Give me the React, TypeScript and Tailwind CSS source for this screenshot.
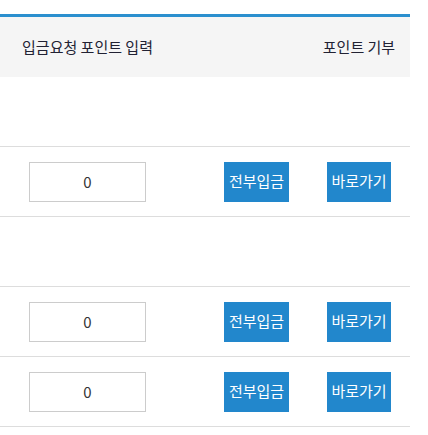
const rows = ["empty", "input", "empty", "input", "input"];

function InputRow() {
  return (
    <div className="h-[70px] border-b border-[#dddddd] flex items-center">
      <div className="w-[175px] flex justify-center">
        <input
          type="text"
          defaultValue="0"
          className="w-[117px] h-[40px] border border-[#cccccc] bg-white text-center text-[15px] text-[#333333] outline-none"
        />
      </div>
      <div className="ml-[49px] flex gap-[38px]">
        <button className="w-[65px] h-[40px] bg-[#2287cc] text-white text-[15px]">전부입금</button>
        <button className="w-[64px] h-[40px] bg-[#2287cc] text-white text-[15px]">바로가기</button>
      </div>
    </div>
  );
}

export default function App() {
  return (
    <div
      className="bg-white min-h-[435px] pt-[14px]"
      style={{ fontFamily: '"Noto Sans CJK KR", "Noto Sans", sans-serif' }}
    >
      <div className="w-[410px] border-t-[3px] border-[#2b8fce]">
        <div className="h-[60px] bg-[#f5f5f5] flex items-center text-[15px] text-[#222233]">
          <div className="w-[175px] text-center">입금요청 포인트 입력</div>
          <div className="flex-1" />
          <div className="w-[102px] text-center">포인트 기부</div>
        </div>
        {rows.map((r, i) =>
          r === "empty" ? (
            <div key={i} className="h-[70px] border-b border-[#dddddd]" />
          ) : (
            <InputRow key={i} />
          )
        )}
      </div>
    </div>
  );
}
